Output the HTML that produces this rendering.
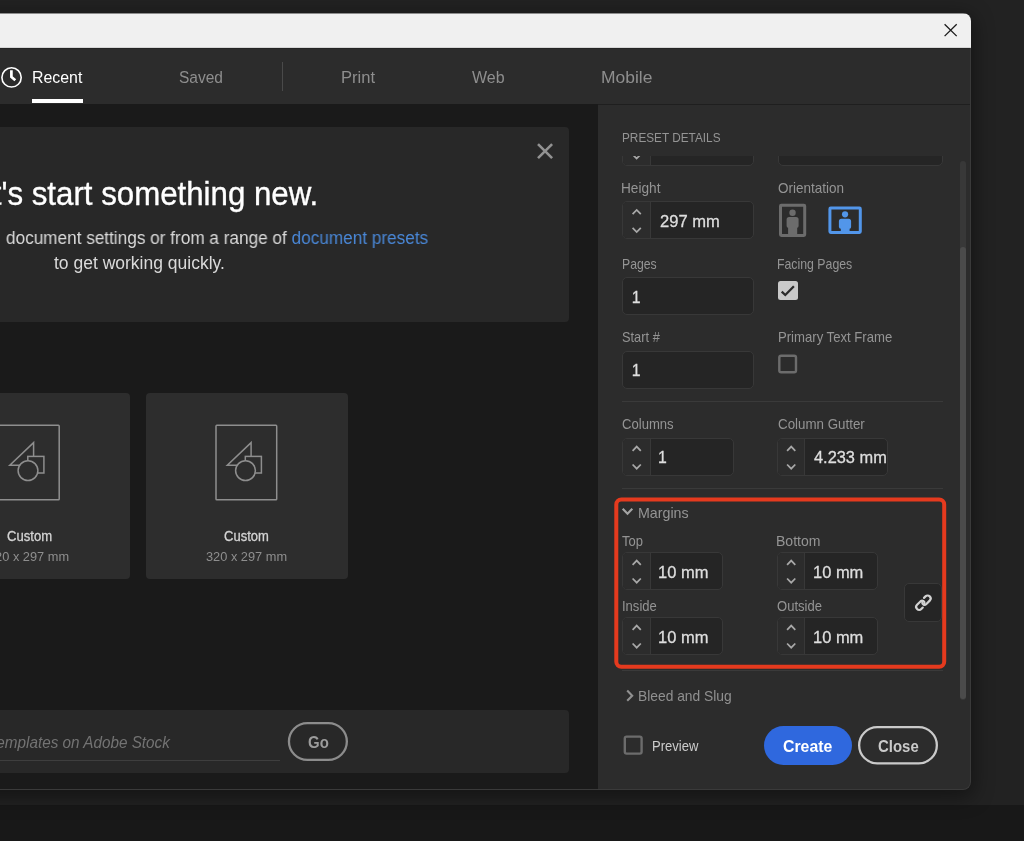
<!DOCTYPE html>
<html><head><meta charset="utf-8"><title>New Document</title>
<style>
html,body{margin:0;padding:0}
body{width:1024px;height:841px;overflow:hidden;position:relative;background:#222222;font-family:"Liberation Sans",sans-serif}
.t{position:absolute;white-space:nowrap;line-height:1;transform-origin:0 0}
#dlg{position:absolute;left:-40px;top:13px;width:1011px;height:777px;border-radius:8px;overflow:hidden;background:#1a1a1a;box-shadow:0 5px 20px 3px rgba(0,0,0,.4)}
#in{position:absolute;left:40px;top:-13px;width:1024px;height:841px;will-change:transform}
#ov{position:absolute;left:0;top:0}
</style></head><body>
<div style="position:absolute;left:0px;top:805px;width:1024px;height:36px;background:#181818"></div>
<div id="dlg"><div id="in">
<div style="position:absolute;left:-40px;top:13px;width:1011px;height:1px;background:#8c8c8c"></div>
<div style="position:absolute;left:-40px;top:14px;width:1011px;height:33px;background:#f0f0f0"></div>
<div style="position:absolute;left:-40px;top:47px;width:1011px;height:1px;background:#d6d6d6"></div>
<div style="position:absolute;left:-40px;top:48px;width:1011px;height:56px;background:#2c2c2c;border-top:1px solid #242424;box-sizing:border-box"></div>
<div style="position:absolute;left:32px;top:99px;width:51px;height:4px;background:#fff"></div>
<div style="position:absolute;left:282px;top:62px;width:1px;height:29px;background:#4a4a4a"></div>
<div style="position:absolute;left:-300px;top:127px;width:869px;height:195px;background:#282828;border-radius:4px"></div>
<div style="position:absolute;left:-72px;top:393px;width:202px;height:186px;background:#2d2d2d;border-radius:4px"></div>
<div style="position:absolute;left:145.5px;top:393px;width:202px;height:186px;background:#2d2d2d;border-radius:4px"></div>
<div style="position:absolute;left:-300px;top:710.4px;width:869px;height:62.3px;background:#282828;border-radius:4px"></div>
<div style="position:absolute;left:-100px;top:759.5px;width:379.5px;height:1px;background:#3e3e3e"></div>
<div style="position:absolute;left:598px;top:104px;width:373px;height:686px;background:#2c2c2c;border-top:1px solid #1f1f1f;box-sizing:border-box"></div>
<div style="position:absolute;left:598px;top:156px;width:373px;height:545px;overflow:hidden"><div style="position:absolute;left:-598px;top:-156px">
<div style="position:absolute;left:622px;top:127.6px;width:132px;height:38px;box-sizing:border-box;border:1px solid #383838;border-radius:5px;background:#252525;overflow:hidden"><div style="position:absolute;left:0;top:0;width:27px;height:100%;background:#2c2c2c;border-right:1px solid #383838"></div></div>
<div style="position:absolute;left:778px;top:128px;width:165px;height:38px;box-sizing:border-box;border:1px solid #383838;border-radius:5px;background:#252525;overflow:hidden"></div>
<div style="position:absolute;left:622px;top:201px;width:132px;height:38px;box-sizing:border-box;border:1px solid #383838;border-radius:5px;background:#252525;overflow:hidden"><div style="position:absolute;left:0;top:0;width:27px;height:100%;background:#2c2c2c;border-right:1px solid #383838"></div></div>
<div style="position:absolute;left:622px;top:277px;width:132px;height:38px;box-sizing:border-box;border:1px solid #383838;border-radius:5px;background:#252525;overflow:hidden"></div>
<div style="position:absolute;left:622px;top:351px;width:132px;height:38px;box-sizing:border-box;border:1px solid #383838;border-radius:5px;background:#252525;overflow:hidden"></div>
<div style="position:absolute;left:622px;top:438px;width:111.5px;height:37.5px;box-sizing:border-box;border:1px solid #383838;border-radius:5px;background:#252525;overflow:hidden"><div style="position:absolute;left:0;top:0;width:27px;height:100%;background:#2c2c2c;border-right:1px solid #383838"></div></div>
<div style="position:absolute;left:777px;top:438px;width:111px;height:37.5px;box-sizing:border-box;border:1px solid #383838;border-radius:5px;background:#252525;overflow:hidden"><div style="position:absolute;left:0;top:0;width:26px;height:100%;background:#2c2c2c;border-right:1px solid #383838"></div></div>
<div style="position:absolute;left:622px;top:552px;width:100.5px;height:37.5px;box-sizing:border-box;border:1px solid #383838;border-radius:5px;background:#252525;overflow:hidden"><div style="position:absolute;left:0;top:0;width:27px;height:100%;background:#2c2c2c;border-right:1px solid #383838"></div></div>
<div style="position:absolute;left:777px;top:552px;width:100.5px;height:37.5px;box-sizing:border-box;border:1px solid #383838;border-radius:5px;background:#252525;overflow:hidden"><div style="position:absolute;left:0;top:0;width:26px;height:100%;background:#2c2c2c;border-right:1px solid #383838"></div></div>
<div style="position:absolute;left:622px;top:617px;width:100.5px;height:37.5px;box-sizing:border-box;border:1px solid #383838;border-radius:5px;background:#252525;overflow:hidden"><div style="position:absolute;left:0;top:0;width:27px;height:100%;background:#2c2c2c;border-right:1px solid #383838"></div></div>
<div style="position:absolute;left:777px;top:617px;width:100.5px;height:37.5px;box-sizing:border-box;border:1px solid #383838;border-radius:5px;background:#252525;overflow:hidden"><div style="position:absolute;left:0;top:0;width:26px;height:100%;background:#2c2c2c;border-right:1px solid #383838"></div></div>
<div style="position:absolute;left:622px;top:401px;width:321px;height:1px;background:#3a3a3a"></div>
<div style="position:absolute;left:622px;top:488px;width:321px;height:1px;background:#3a3a3a"></div>
<div style="position:absolute;left:622px;top:670px;width:321px;height:1px;background:#3a3a3a"></div>
</div></div>
<div style="position:absolute;left:904.3px;top:583.3px;width:37.6px;height:38.4px;box-sizing:border-box;border:1px solid #383838;border-radius:5px;background:#252525"></div>
<div style="position:absolute;left:778.2px;top:280.7px;width:19.4px;height:19.4px;background:#c9c9c9;border-radius:2.5px"></div>
<div style="position:absolute;left:959.7px;top:161px;width:6.1px;height:539px;background:#383838;border-radius:3px"></div>
<div style="position:absolute;left:959.7px;top:247px;width:6.1px;height:452px;background:#4b4b4b;border-radius:3px"></div>
<div style="position:absolute;left:764.3px;top:726px;width:87.7px;height:38.5px;background:#2f68de;border-radius:19.5px"></div>
<div style="position:absolute;left:-40px;top:48px;width:1011px;height:742px;box-sizing:border-box;border:1px solid #3a3a3a;border-top:0;border-radius:0 0 8px 8px"></div>
<div class="t" style="left:32.29px;top:69.00px;font-size:17.4px;color:#ffffff;transform:scaleX(0.9140);">Recent</div>
<div class="t" style="left:178.70px;top:69.00px;font-size:17.4px;color:#8e8e8e;transform:scaleX(0.8923);">Saved</div>
<div class="t" style="left:341.35px;top:69.00px;font-size:17.4px;color:#8e8e8e;transform:scaleX(0.9534);">Print</div>
<div class="t" style="left:472.30px;top:69.00px;font-size:17.4px;color:#8e8e8e;transform:scaleX(0.9203);">Web</div>
<div class="t" style="left:600.70px;top:69.00px;font-size:17.4px;color:#8e8e8e;transform:scaleX(1.0029);">Mobile</div>
<div class="t" style="left:-41.70px;top:177.00px;font-size:33px;color:#ffffff;transform:scaleX(0.9468);-webkit-text-stroke:0.35px #fff;">Let's start something new.</div>
<div class="t" style="left:-145.12px;top:230.00px;font-size:17.5px;color:#dadada;transform:scaleX(0.9821);"><span style="visibility:hidden">Start with your own </span>document settings or from a range of <span style="color:#4a88d8">document presets</span></div>
<div class="t" style="left:54.00px;top:255.00px;font-size:17.5px;color:#dadada;">to get working quickly.</div>
<div class="t" style="left:6.50px;top:529.00px;font-size:14px;color:#d4d4d4;transform:scaleX(0.9354);-webkit-text-stroke:0.3px #d4d4d4;">Custom</div>
<div class="t" style="left:224.20px;top:529.00px;font-size:14px;color:#d4d4d4;transform:scaleX(0.9291);-webkit-text-stroke:0.3px #d4d4d4;">Custom</div>
<div class="t" style="left:-11.70px;top:550.00px;font-size:13.3px;color:#8e8e8e;transform:scaleX(0.9622);">320 x 297 mm</div>
<div class="t" style="left:205.80px;top:550.00px;font-size:13.3px;color:#8e8e8e;transform:scaleX(0.9622);">320 x 297 mm</div>
<div class="t" style="left:-81.38px;top:735.00px;font-size:16px;color:#737373;transform:scaleX(0.9551);font-style:italic;">Find more templates on Adobe Stock</div>
<div class="t" style="left:307.70px;top:734.00px;font-size:16.2px;color:#9c9c9c;transform:scaleX(0.9251);font-weight:bold;">Go</div>
<div class="t" style="left:621.61px;top:131.00px;font-size:13.2px;color:#949494;transform:scaleX(0.8940);">PRESET DETAILS</div>
<div class="t" style="left:621.46px;top:181.00px;font-size:14.5px;color:#949494;transform:scaleX(0.9417);">Height</div>
<div class="t" style="left:778.20px;top:181.00px;font-size:14.5px;color:#949494;transform:scaleX(0.9314);">Orientation</div>
<div class="t" style="left:659.50px;top:214.00px;font-size:15.8px;color:#dedede;transform:scaleX(1.0474);-webkit-text-stroke:0.3px #dedede;">297 mm</div>
<div class="t" style="left:621.56px;top:257.00px;font-size:14.5px;color:#949494;transform:scaleX(0.8429);">Pages</div>
<div class="t" style="left:777.35px;top:257.00px;font-size:14.5px;color:#949494;transform:scaleX(0.8488);">Facing Pages</div>
<div class="t" style="left:631.80px;top:290.00px;font-size:15.8px;color:#dedede;-webkit-text-stroke:0.3px #dedede;">1</div>
<div class="t" style="left:622.40px;top:330.00px;font-size:14.5px;color:#949494;transform:scaleX(0.8839);">Start #</div>
<div class="t" style="left:777.70px;top:330.00px;font-size:14.5px;color:#949494;transform:scaleX(0.9049);">Primary Text Frame</div>
<div class="t" style="left:631.80px;top:363.00px;font-size:15.8px;color:#dedede;-webkit-text-stroke:0.3px #dedede;">1</div>
<div class="t" style="left:622.40px;top:417.00px;font-size:14.5px;color:#949494;transform:scaleX(0.9023);">Columns</div>
<div class="t" style="left:778.20px;top:417.00px;font-size:14.5px;color:#949494;transform:scaleX(0.9200);">Column Gutter</div>
<div class="t" style="left:658.10px;top:450.00px;font-size:15.8px;color:#dedede;-webkit-text-stroke:0.3px #dedede;">1</div>
<div class="t" style="left:814.00px;top:450.00px;font-size:15.8px;color:#dedede;transform:scaleX(1.0360);-webkit-text-stroke:0.3px #dedede;">4.233 mm</div>
<div class="t" style="left:638.02px;top:506.00px;font-size:14.5px;color:#949494;transform:scaleX(0.9817);">Margins</div>
<div class="t" style="left:622.40px;top:534.00px;font-size:14.5px;color:#949494;transform:scaleX(0.8964);">Top</div>
<div class="t" style="left:776.43px;top:534.00px;font-size:14.5px;color:#949494;transform:scaleX(0.9675);">Bottom</div>
<div class="t" style="left:658.46px;top:565.00px;font-size:15.8px;color:#dedede;transform:scaleX(1.0442);-webkit-text-stroke:0.3px #dedede;">10 mm</div>
<div class="t" style="left:813.26px;top:565.00px;font-size:15.8px;color:#dedede;transform:scaleX(1.0420);-webkit-text-stroke:0.3px #dedede;">10 mm</div>
<div class="t" style="left:621.50px;top:599.00px;font-size:14.5px;color:#949494;transform:scaleX(0.8983);">Inside</div>
<div class="t" style="left:777.40px;top:599.00px;font-size:14.5px;color:#949494;transform:scaleX(0.8997);">Outside</div>
<div class="t" style="left:658.46px;top:630.00px;font-size:15.8px;color:#dedede;transform:scaleX(1.0442);-webkit-text-stroke:0.3px #dedede;">10 mm</div>
<div class="t" style="left:813.26px;top:630.00px;font-size:15.8px;color:#dedede;transform:scaleX(1.0420);-webkit-text-stroke:0.3px #dedede;">10 mm</div>
<div class="t" style="left:637.85px;top:689.00px;font-size:14.6px;color:#909090;transform:scaleX(0.9461);">Bleed and Slug</div>
<div class="t" style="left:652.10px;top:739.00px;font-size:14.5px;color:#cccccc;transform:scaleX(0.9002);">Preview</div>
<div class="t" style="left:783.40px;top:739.00px;font-size:16.6px;color:#ffffff;transform:scaleX(0.9548);font-weight:bold;">Create</div>
<div class="t" style="left:877.50px;top:739.00px;font-size:16.6px;color:#cacaca;transform:scaleX(0.9008);font-weight:bold;">Close</div>
<svg id="ov" width="1024" height="841" viewBox="0 0 1024 841"><path d="M632.6 214.2 L636.7 210.0 L640.8 214.2" fill="none" stroke="#a8a8a8" stroke-width="1.75"/>
<path d="M632.6 227.9 L636.7 232.1 L640.8 227.9" fill="none" stroke="#a8a8a8" stroke-width="1.75"/>
<path d="M632.6 450.8 L636.7 446.6 L640.8 450.8" fill="none" stroke="#a8a8a8" stroke-width="1.75"/>
<path d="M632.6 464.5 L636.7 468.7 L640.8 464.5" fill="none" stroke="#a8a8a8" stroke-width="1.75"/>
<path d="M787.1 450.8 L791.2 446.6 L795.3 450.8" fill="none" stroke="#a8a8a8" stroke-width="1.75"/>
<path d="M787.1 464.5 L791.2 468.7 L795.3 464.5" fill="none" stroke="#a8a8a8" stroke-width="1.75"/>
<path d="M632.6 564.8 L636.7 560.6 L640.8 564.8" fill="none" stroke="#a8a8a8" stroke-width="1.75"/>
<path d="M632.6 578.5 L636.7 582.7 L640.8 578.5" fill="none" stroke="#a8a8a8" stroke-width="1.75"/>
<path d="M787.1 564.8 L791.2 560.6 L795.3 564.8" fill="none" stroke="#a8a8a8" stroke-width="1.75"/>
<path d="M787.1 578.5 L791.2 582.7 L795.3 578.5" fill="none" stroke="#a8a8a8" stroke-width="1.75"/>
<path d="M632.6 629.8 L636.7 625.6 L640.8 629.8" fill="none" stroke="#a8a8a8" stroke-width="1.75"/>
<path d="M632.6 643.5 L636.7 647.7 L640.8 643.5" fill="none" stroke="#a8a8a8" stroke-width="1.75"/>
<path d="M787.1 629.8 L791.2 625.6 L795.3 629.8" fill="none" stroke="#a8a8a8" stroke-width="1.75"/>
<path d="M787.1 643.5 L791.2 647.7 L795.3 643.5" fill="none" stroke="#a8a8a8" stroke-width="1.75"/>
<clipPath id="cl"><rect x="598" y="156" width="373" height="545"/></clipPath>
<path clip-path="url(#cl)" d="M632.4 154.3 L636.6 158.5 L640.8 154.3" fill="none" stroke="#a8a8a8" stroke-width="1.7"/>
<rect x="288.95" y="723.05" width="57.9" height="36.9" rx="18.45" fill="none" stroke="#8c8c8c" stroke-width="2.3"/>
<rect x="859.15" y="727.15" width="77.7" height="36.2" rx="18.1" fill="none" stroke="#cacaca" stroke-width="2.3"/>
<rect x="779.3" y="355.8" width="16.7" height="16.4" rx="1.8" fill="none" stroke="#6c6c6c" stroke-width="2.4"/>
<rect x="624.8" y="736.6" width="16.8" height="17" rx="1.8" fill="none" stroke="#6c6c6c" stroke-width="2.4"/>
<path d="M944.6 24.3 L956.7 36.1 M956.7 24.3 L944.6 36.1" stroke="#1a1a1a" stroke-width="1.3" fill="none"/>
<circle cx="11.55" cy="77.4" r="9.65" fill="none" stroke="#fff" stroke-width="1.6"/>
<path d="M11.4 70.2 V76.9 L15.3 80.3" fill="none" stroke="#fff" stroke-width="2.7"/>
<path d="M538 144.2 L552.1 158.2 M552.1 144.2 L538 158.2" stroke="#929292" stroke-width="2.6" fill="none"/>
<rect x="-1.5" y="425.35" width="60.7" height="74.4" rx="0.8" fill="none" stroke="#8e8e8e" stroke-width="1.5"/>
<path d="M33.6 442.6 L9.8 465.2 H33.6 Z" fill="#2d2d2d" stroke="#8e8e8e" stroke-width="1.5" stroke-linejoin="miter"/>
<rect x="27.8" y="456.4" width="16.1" height="16.6" fill="#2d2d2d" stroke="#8e8e8e" stroke-width="1.5"/>
<circle cx="28.0" cy="470.6" r="9.9" fill="#2d2d2d" stroke="#8e8e8e" stroke-width="1.5"/>
<rect x="216.0" y="425.35" width="60.7" height="74.4" rx="0.8" fill="none" stroke="#8e8e8e" stroke-width="1.5"/>
<path d="M251.1 442.6 L227.3 465.2 H251.1 Z" fill="#2d2d2d" stroke="#8e8e8e" stroke-width="1.5" stroke-linejoin="miter"/>
<rect x="245.3" y="456.4" width="16.1" height="16.6" fill="#2d2d2d" stroke="#8e8e8e" stroke-width="1.5"/>
<circle cx="245.5" cy="470.6" r="9.9" fill="#2d2d2d" stroke="#8e8e8e" stroke-width="1.5"/>
<rect x="780.5" y="205.2" width="24.2" height="30.2" rx="0.8" fill="none" stroke="#6c6c6c" stroke-width="3"/>
<circle cx="792.55" cy="212.8" r="3.2" fill="#6c6c6c"/>
<path d="M786.6 225.8 V219.5 Q786.6 217 789.1 217 H796.1 Q798.6 217 798.6 219.5 V225.8 Q798.6 227.8 797.2 227.8 V234.5 H788.1 V227.8 Q786.6 227.8 786.6 225.8 Z" fill="#6c6c6c"/>
<rect x="829.9" y="208.1" width="30.4" height="24.3" rx="0.8" fill="none" stroke="#5296ea" stroke-width="3"/>
<circle cx="845.05" cy="214.3" r="3.1" fill="#5296ea"/>
<path d="M838.9 226.8 V221.2 Q838.9 218.7 841.4 218.7 H848.6 Q851.1 218.7 851.1 221.2 V226.8 Q851.1 228.8 849.6 228.8 V231.5 H840.8 V228.8 Q838.9 228.8 838.9 226.8 Z" fill="#5296ea"/>
<path d="M781.7 291.7 L785.3 295.0 L793.9 286.3" fill="none" stroke="#2a2a2a" stroke-width="2.3"/>
<rect x="616.3" y="499.4" width="327.9" height="167.4" rx="5" fill="none" stroke="#e53a1e" stroke-width="4"/>
<path d="M622.7 508.7 L627.5 513.8 L632.3 508.7" fill="none" stroke="#a4a4a4" stroke-width="2.1"/>
<path d="M627.2 690.6 L632.2 695.7 L627.2 700.8" fill="none" stroke="#909090" stroke-width="2.1"/>
<g fill="none" stroke="#d2d2d2" stroke-width="2.2" stroke-linecap="round"><path transform="translate(921.1 605.0) rotate(-45)" d="M-0.6 3.0 L-2.7 3.0 A3.0 3.0 0 0 1 -2.7 -3.0 L2.4 -3.0 A2.3 2.3 0 0 1 3.6 1.2"/><path transform="translate(925.7 600.4) rotate(-45)" d="M0.6 -3.0 L2.7 -3.0 A3.0 3.0 0 0 1 2.7 3.0 L-2.4 3.0 A2.3 2.3 0 0 1 -3.6 -1.2"/></g></svg>
</div></div>
</body></html>
